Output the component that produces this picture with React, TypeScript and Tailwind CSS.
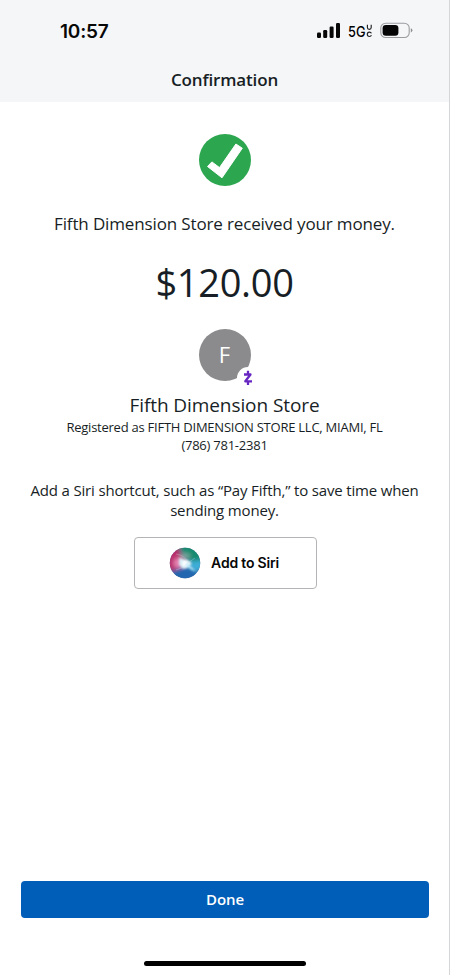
function StatusIcons() {
  return (
    <svg width="97" height="24" viewBox="316 19 97 24">
      <g fill="#080808">
        <rect x="317" y="32.5" width="4" height="5.5" rx="1.2" />
        <rect x="323.2" y="30" width="4" height="8" rx="1.2" />
        <rect x="329.6" y="26.5" width="4" height="11.5" rx="1.2" />
        <rect x="336" y="23" width="4" height="15" rx="1.2" />
      </g>
      <text x="348" y="36.5" fontSize="15" fontWeight="500" textLength="17.5" lengthAdjust="spacingAndGlyphs">5G</text>
      <path d="M367.4 24.7v2.8q0 1.8 1.9 1.8t1.9-1.8v-2.8M371.4 33.4q-.4-1.3-2-1.3-2.1 0-2.1 2.2t2.1 2.2q1.6 0 2-1.3" fill="none" stroke="#222" strokeWidth="1.15" />
      <rect x="380.8" y="23.3" width="28.4" height="14.2" rx="4.8" fill="none" stroke="#9b9c9e" strokeWidth="1.1" />
      <rect x="382.6" y="25" width="15.8" height="10.8" rx="3.2" fill="#050505" />
      <path d="M410.8 28.2q1.6.7 1.6 2.1t-1.6 2.1z" fill="#8d8e90" />
    </svg>
  )
}

function SiriOrb() {
  return (
    <svg width="32" height="32" viewBox="0 0 32 32">
      <defs>
        <clipPath id="orb"><circle cx="16" cy="16" r="15.2" /></clipPath>
        <filter id="soft" x="-50%" y="-50%" width="200%" height="200%"><feGaussianBlur stdDeviation="2.1" /></filter>
        <filter id="glow" x="-50%" y="-50%" width="200%" height="200%"><feGaussianBlur stdDeviation="1.2" /></filter>
      </defs>
      <g clipPath="url(#orb)">
        <rect width="32" height="32" fill="#4d659c" />
        <g filter="url(#soft)">
          <path d="M9-2h25v16L18 14z" fill="#188b70" />
          <path d="M-2 3 9 0l7 15-7 10-11-2z" fill="#b92f6c" />
          <path d="m17 15 17-2v9l-9 4z" fill="#3eafd8" />
          <path d="m1 25 16-6 13 7-6 8H5z" fill="#2466af" />
          <ellipse cx="9.5" cy="16" rx="5" ry="5" fill="#e785b4" />
          <ellipse cx="16" cy="9" rx="5" ry="2.5" fill="#81aaa4" />
        </g>
        <g filter="url(#glow)">
          <path d="m10 11 8 2 5 3-4 5-5 1-4-4z" fill="#d9eef6" />
          <circle cx="17" cy="16.5" r="3.6" fill="#fff" />
          <path d="m17 15 10 9-4-1-6-4z" fill="#b8e9fb" />
        </g>
        <path d="M7 7q9 1 12 9M7 23q8-2 12-7l7-5" fill="none" stroke="#c9e4ea" strokeWidth=".8" opacity=".4" />
      </g>
    </svg>
  )
}

export default function App() {
  return (
    <main className="flex h-[975px] w-[450px] flex-col border-r border-[#d5d6d8] bg-white font-['Open_Sans',sans-serif] text-[#171e25]">
      <header className="h-[102px] bg-[#f5f6f8]">
        <div className="flex h-[62px] items-center justify-between pl-[60px] pr-[36px] font-[Inter,sans-serif] text-[#080808]">
          <span className="pt-0.5 text-[19px] font-semibold leading-6 tracking-[-0.2px]">10:57</span>
          <StatusIcons />
        </div>
        <h1 className="pt-1.5 text-center text-[17px] font-semibold leading-6 tracking-[-0.15px]">Confirmation</h1>
      </header>
      <section className="flex flex-1 flex-col items-center text-center">
        <svg className="mt-8" width="52" height="52" viewBox="0 0 52 52">
          <circle cx="26" cy="26" r="26" fill="#2da650" />
          <path d="m8.5 32.5 4.4-4.6 7.6 5.7L36.9 10l6.4 4.2L23 43.8z" fill="#fff" stroke="#fff" strokeWidth="1" strokeLinejoin="round" />
        </svg>
        <p className="mt-[26px] text-[17px] leading-6 tracking-[-0.14px]">Fifth Dimension Store received your money.</p>
        <p className="mt-[22px] text-[38px] leading-[48px] tracking-[-0.3px]">$120.00</p>
        <div className="relative mt-[23px] h-[52px] w-[52px] rounded-full bg-[#8b8b8d] text-[22px] leading-[51px] text-white">
          F
          <svg className="absolute left-[38px] top-[38px]" width="22" height="22" viewBox="0 0 22 22">
            <circle cx="11" cy="11" r="11" fill="#fff" />
            <path d="M7 7.5h6.5l-5.2 6.8H15M11 3.8v3.7m0 6.8V18" fill="none" stroke="#6726c2" strokeWidth="2.3" strokeLinejoin="round" />
          </svg>
        </div>
        <h2 className="mt-3 text-[19px] leading-6 tracking-[-0.08px]">Fifth Dimension Store</h2>
        <p className="pt-px text-[13px] leading-[18px] tracking-[-0.24px]">Registered as FIFTH DIMENSION STORE LLC, MIAMI, FL<br />(786) 781-2381</p>
        <p className="mt-[26px] text-[15px] leading-5 tracking-[-0.16px]">Add a Siri shortcut, such as “Pay Fifth,” to save time when<br />sending money.</p>
        <button className="ml-px mt-[17px] flex h-[52px] w-[183px] items-center justify-center gap-2.5 rounded border border-[#b4b4b6] pr-0.5 font-[Inter,sans-serif] text-sm font-semibold tracking-[-0.2px] text-[#080808]">
          <SiriOrb />
          <span>Add to Siri</span>
        </button>
        <button className="ml-px mt-auto h-[37px] w-[408px] rounded bg-[#005eb8] text-[15px] font-semibold tracking-[-0.1px] text-white">Done</button>
        <div className="mb-[9px] ml-px mt-[43px] h-[5px] w-[162px] rounded-full bg-black" />
      </section>
    </main>
  )
}
